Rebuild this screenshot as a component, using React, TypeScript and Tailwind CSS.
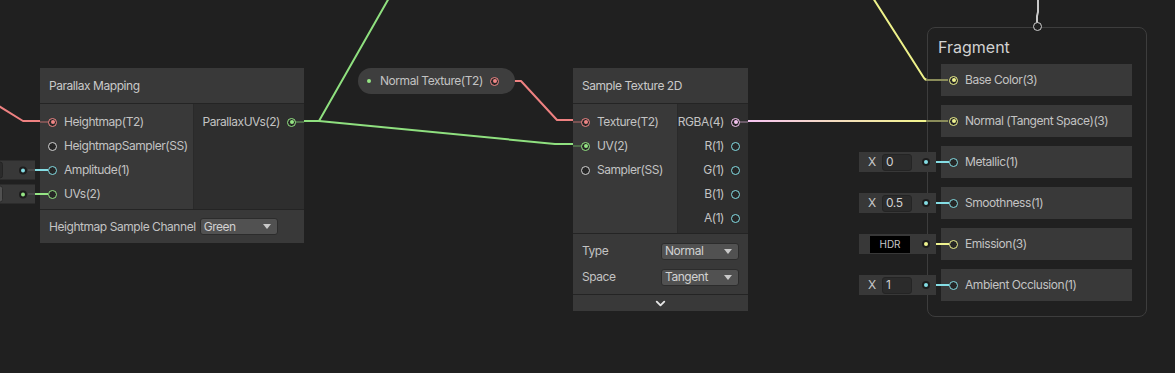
import { ChevronDown } from "lucide-react";

// Unity Shader Graph — Parallax Mapping -> Sample Texture 2D -> Fragment

const ring = {
  red: "border-[#ef8686]",
  green: "border-[#95e584]",
  cyan: "border-[#84dde4]",
  yellow: "border-[#eef28e]",
  pink: "border-[#f5c4f0]",
  white: "border-[#d2d2d2]",
};
const fill = {
  red: "bg-[#ef8686]",
  green: "bg-[#95e584]",
  cyan: "bg-[#84dde4]",
  yellow: "bg-[#eef28e]",
  pink: "bg-[#f5c4f0]",
  white: "bg-[#d2d2d2]",
};
type PortColor = keyof typeof ring;

function Port({ c, on = false }: { c: PortColor; on?: boolean }) {
  return (
    <span
      className={`relative z-10 flex size-[9px] shrink-0 items-center justify-center rounded-full border-[1.5px] bg-[#262626] ${ring[c]}`}
    >
      {on && <span className={`size-[4px] rounded-full ${fill[c]}`} />}
    </span>
  );
}

function Dot({ c }: { c: PortColor }) {
  return (
    <span className="flex size-[8px] shrink-0 items-center justify-center rounded-full bg-[#1d1d1d]">
      <span className={`size-[4px] rounded-full ${fill[c]}`} />
    </span>
  );
}

function Caret() {
  return (
    <svg width="8" height="5" viewBox="0 0 8 5" className="shrink-0">
      <path d="M0 0 H8 L4 5 Z" fill="#c9c9c9" />
    </svg>
  );
}

function Dropdown({ label, w }: { label: string; w: string }) {
  return (
    <div
      className={`flex h-[17px] items-center justify-between rounded-[3px] border border-[#2c2c2c] bg-[#515151] pl-[3px] pr-[6px] text-[12px] leading-none text-[#d2d2d2] ${w}`}
    >
      {label}
      <Caret />
    </div>
  );
}

function Wires() {
  return (
    <svg className="absolute inset-0" width="1175" height="373" viewBox="0 0 1175 373">
      <defs>
        <linearGradient id="pk" x1="748" y1="0" x2="927" y2="0" gradientUnits="userSpaceOnUse">
          <stop offset="0" stopColor="#f7c4f3" />
          <stop offset="1" stopColor="#f2f58a" />
        </linearGradient>
      </defs>
      <g fill="none" strokeWidth="2" strokeLinejoin="round" strokeLinecap="round">
        <path d="M-6 103 L23 121 L40 121" stroke="#ee8181" />
        <path d="M304 121 L319 121 L389 -2" stroke="#8fe07f" />
        <path d="M319 121 L555 144 L573 144" stroke="#8fe07f" />
        <path d="M515 81 L521 81 L557 120 L573 120" stroke="#ee8181" />
        <path d="M748 121 L927 121" stroke="url(#pk)" strokeLinecap="butt" />
        <path d="M873 -2 L924 78 Q925 80 928 80" stroke="#eef28a" />
        <path d="M1038 -2 L1038 12 L1037 16 L1037 23" stroke="#c9c9c9" />
      </g>
    </svg>
  );
}

function ParallaxNode() {
  const rows: { label: string; c: PortColor; on?: boolean; extra?: "field" | "drop" }[] = [
    { label: "Heightmap(T2)", c: "red", on: true },
    { label: "HeightmapSampler(SS)", c: "white" },
    { label: "Amplitude(1)", c: "cyan", extra: "field" },
    { label: "UVs(2)", c: "green", extra: "drop" },
  ];
  return (
    <div className="absolute left-[40px] top-[68px] w-[264px] bg-[#393939]">
      <div className="flex h-9 items-center border-b border-[#242424] px-[9px] text-[#c9c9c9]">Parallax Mapping</div>
      <div className="flex">
        <div className="w-[154px] border-r border-[#2a2a2a] pb-[3px] pt-[6px]">
          {rows.map((r) => (
            <div key={r.label} className="relative flex h-6 items-center gap-[7px] pl-[8px]">
              {r.label === "Heightmap(T2)" && (
                <span className="absolute left-0 top-1/2 h-[2px] w-[10px] -translate-y-1/2 bg-[#7a5252]" />
              )}
              {r.extra && (
                <>
                  <div className="absolute right-[calc(100%+5px)] top-1/2 flex h-[19px] w-[60px] -translate-y-1/2 items-center bg-[#383838] pr-[8px]">
                    {r.extra === "field" ? (
                      <span className="h-[17px] w-[28px] rounded-[3px] border border-[#242424] bg-[#2b2b2b]" />
                    ) : (
                      <span className="flex h-[17px] w-[28px] items-center justify-end rounded-[3px] border border-[#2c2c2c] bg-[#515151] pr-[4px]">
                        <Caret />
                      </span>
                    )}
                    <span className="ml-auto">
                      <Dot c={r.c} />
                    </span>
                  </div>
                  <span
                    className={`absolute left-[-12px] top-1/2 h-[2px] w-[20px] -translate-y-1/2 ${fill[r.c]}`}
                  />
                  <span className="absolute left-[-12px] top-1/2 h-[2px] w-[7px] -translate-y-1/2 bg-[#4b4b4b]" />
                </>
              )}
              <Port c={r.c} on={r.on} />
              <span className="whitespace-nowrap">{r.label}</span>
            </div>
          ))}
        </div>
        <div className="flex-1 bg-[#2e2e2e] pt-[6px]">
          <div className="relative flex h-6 items-center justify-end gap-[7px] pr-[8px]">
            <span className="absolute right-0 top-1/2 h-[2px] w-[10px] -translate-y-1/2 bg-[#4d6a48]" />
            ParallaxUVs(2)
            <Port c="green" on />
          </div>
        </div>
      </div>
      <div className="flex h-[34px] items-center gap-[4px] border-t border-[#242424] px-[9px]">
        <span className="whitespace-nowrap">Heightmap Sample Channel</span>
        <Dropdown label="Green" w="w-[78px]" />
      </div>
    </div>
  );
}

function SampleTextureNode() {
  const inputs: { label: string; c: PortColor; on?: boolean; stub?: string }[] = [
    { label: "Texture(T2)", c: "red", on: true, stub: "bg-[#7a5252]" },
    { label: "UV(2)", c: "green", on: true, stub: "bg-[#4d6a48]" },
    { label: "Sampler(SS)", c: "white" },
  ];
  const outputs: { label: string; c: PortColor; on?: boolean }[] = [
    { label: "RGBA(4)", c: "pink", on: true },
    { label: "R(1)", c: "cyan" },
    { label: "G(1)", c: "cyan" },
    { label: "B(1)", c: "cyan" },
    { label: "A(1)", c: "cyan" },
  ];
  return (
    <div className="absolute left-[573px] top-[68px] w-[175px] bg-[#393939]">
      <div className="flex h-9 items-center border-b border-[#242424] px-[9px] text-[#c9c9c9]">Sample Texture 2D</div>
      <div className="flex">
        <div className="w-[110px] border-r border-[#2a2a2a] pb-[3px] pt-[6px]">
          {inputs.map((r) => (
            <div key={r.label} className="relative flex h-6 items-center gap-[7px] pl-[8px]">
              {r.stub && <span className={`absolute left-0 top-1/2 h-[2px] w-[10px] -translate-y-1/2 ${r.stub}`} />}
              <Port c={r.c} on={r.on} />
              <span className="whitespace-nowrap">{r.label}</span>
            </div>
          ))}
        </div>
        <div className="flex-1 bg-[#2e2e2e] pb-[3px] pt-[6px]">
          {outputs.map((r) => (
            <div key={r.label} className="relative flex h-6 items-center justify-end gap-[7px] pr-[8px]">
              {r.on && <span className="absolute right-0 top-1/2 h-[2px] w-[10px] -translate-y-1/2 bg-[#6a5a68]" />}
              {r.label}
              <Port c={r.c} on={r.on} />
            </div>
          ))}
        </div>
      </div>
      <div className="flex flex-col border-t border-[#242424] px-[9px] py-[4px]">
        <div className="flex h-[26px] items-center justify-between">
          Type
          <Dropdown label="Normal" w="w-[78px]" />
        </div>
        <div className="flex h-[26px] items-center justify-between">
          Space
          <Dropdown label="Tangent" w="w-[78px]" />
        </div>
      </div>
      <div className="flex h-[17px] items-center justify-center border-t border-[#242424]">
        <ChevronDown size={15} strokeWidth={3} color="#e6e6e6" />
      </div>
    </div>
  );
}

function NormalTextureProperty() {
  return (
    <div className="absolute left-[358px] top-[68px] flex h-[26px] w-[157px] items-center rounded-full bg-[#3e3e3e] pl-[9px] pr-[16px]">
      <span className="size-[4px] shrink-0 rounded-full bg-[#95e584]" />
      <span className="ml-[9px] whitespace-nowrap">Normal Texture(T2)</span>
      <span className="ml-auto">
        <Port c="red" on />
      </span>
    </div>
  );
}

function FragmentNode() {
  const slots: { label: string; c: PortColor; on?: boolean; value?: string; hdr?: boolean }[] = [
    { label: "Base Color(3)", c: "yellow", on: true },
    { label: "Normal (Tangent Space)(3)", c: "yellow", on: true },
    { label: "Metallic(1)", c: "cyan", value: "0" },
    { label: "Smoothness(1)", c: "cyan", value: "0.5" },
    { label: "Emission(3)", c: "yellow", hdr: true },
    { label: "Ambient Occlusion(1)", c: "cyan", value: "1" },
  ];
  return (
    <div className="absolute left-[927px] top-[27px] h-[290px] w-[220px] rounded-lg border border-[#3d3d3d] bg-[#202020]">
      <span className="absolute left-[105px] top-[-6px] size-[9px] rounded-full border-[1.5px] border-[#cfcfcf] bg-[#202020]" />
      <div className="pl-[10px] pt-[9px] text-[16px] leading-5 tracking-normal text-[#d2d2d2]">Fragment</div>
      <div className="mt-[7px] flex flex-col gap-[9px] pl-[13px] pr-[14px]">
        {slots.map((s) => (
          <div key={s.label} className="relative flex h-8 items-center gap-[7px] bg-[#393939] pl-[8px]">
            {s.on && <span className="absolute left-[-15px] top-1/2 h-[2px] w-[22px] -translate-y-1/2 bg-[#8a8c5a]" />}
            {!s.on && (
              <>
                <div className="absolute right-[calc(100%+5px)] top-1/2 flex h-[20px] w-[77px] -translate-y-1/2 items-center bg-[#383838] pr-[6px]">
                  {s.hdr ? (
                    <span className="ml-[11px] flex h-[17px] w-[40px] items-center justify-center bg-black text-[10px] tracking-normal text-[#c8c8c8]">
                      HDR
                    </span>
                  ) : (
                    <>
                      <span className="ml-[9px] w-[7px] text-[#c8c8c8]">X</span>
                      <span className="ml-[7px] flex h-[17px] w-[30px] items-center rounded-[3px] border border-[#242424] bg-[#2b2b2b] pl-[3px] text-[#d2d2d2]">
                        {s.value}
                      </span>
                    </>
                  )}
                  <span className="ml-auto">
                    <Dot c={s.c} />
                  </span>
                </div>
                <span className={`absolute left-[-5px] top-1/2 h-[2px] w-[13px] -translate-y-1/2 ${fill[s.c]}`} />
              </>
            )}
            <Port c={s.c} on={s.on} />
            <span className="whitespace-nowrap">{s.label}</span>
          </div>
        ))}
      </div>
    </div>
  );
}

export default function App() {
  return (
    <div
      className="relative h-[373px] w-[1175px] overflow-hidden bg-[#202020] text-[12px] tracking-[-0.45px] text-[#c3c3c3]"
      style={{ fontFamily: "Inter, 'Noto Sans', sans-serif" }}
    >
      <Wires />
      <ParallaxNode />
      <NormalTextureProperty />
      <SampleTextureNode />
      <FragmentNode />
    </div>
  );
}
